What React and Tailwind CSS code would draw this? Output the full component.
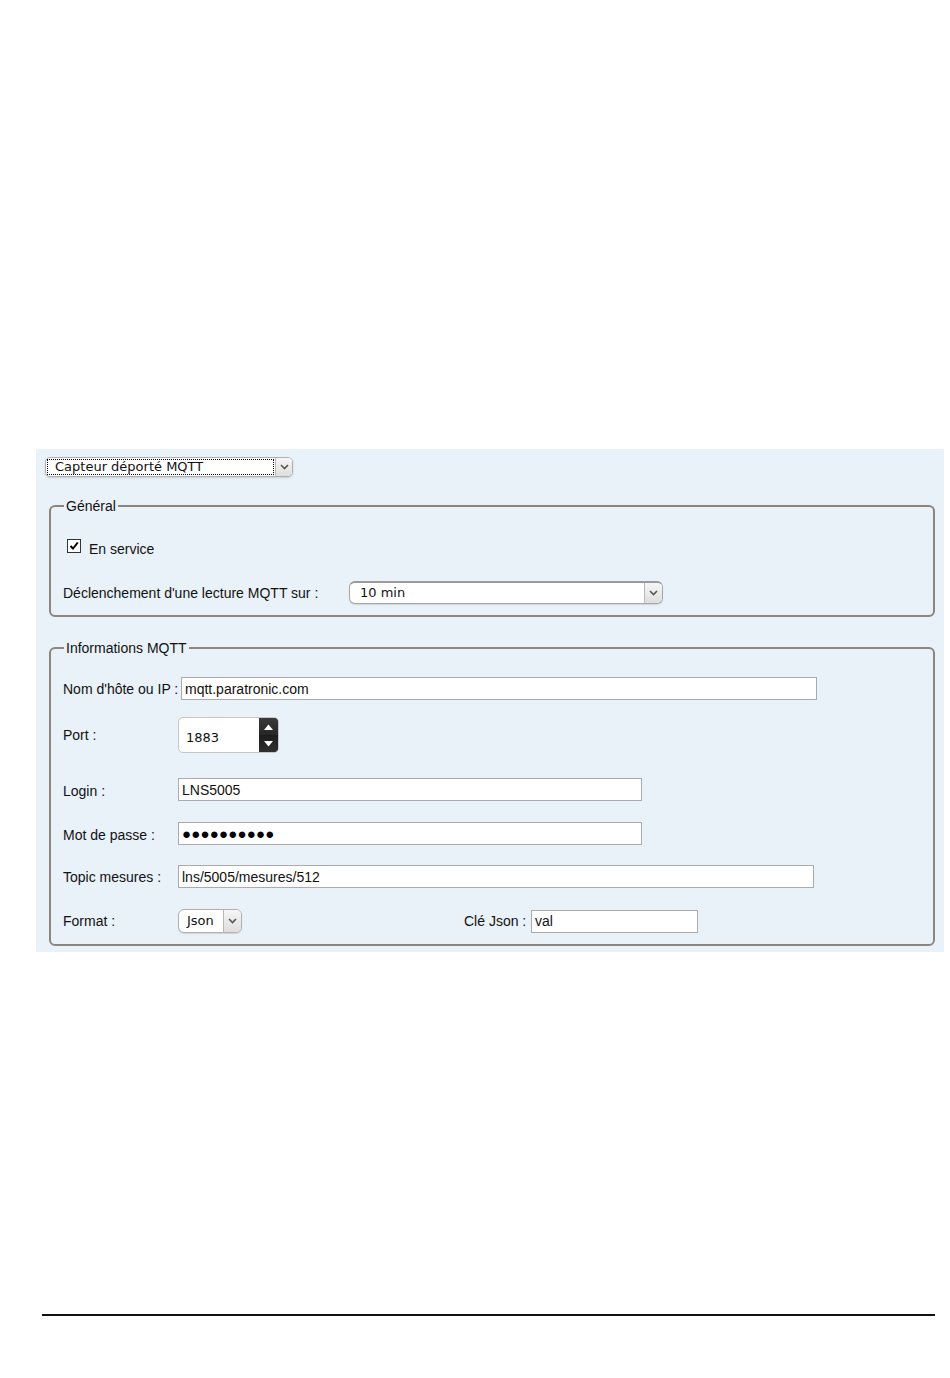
import React from "react";

const lbl = { fontFamily: '"Liberation Sans", Arial, sans-serif' };
const ver = { fontFamily: '"DejaVu Sans", Verdana, sans-serif' };

function Chevron() {
  return (
    <svg width="9" height="6" viewBox="0 0 9 6" className="block">
      <path d="M1 1 L4.5 4.5 L8 1" fill="none" stroke="#555" strokeWidth="1.6" />
    </svg>
  );
}

function ArrowBox({ w = 17 }) {
  return (
    <div
      className="h-full flex items-center justify-center border-l border-[#b8b8b8] bg-gradient-to-b from-[#f6f6f6] to-[#dedede]"
      style={{ width: w }}
    >
      <Chevron />
    </div>
  );
}

function TextInput({ w, value, children }) {
  return (
    <div
      className="h-[23px] bg-white border border-[#a9abae] flex items-center pl-[3px] text-[14px] leading-[16px] text-[#111]"
      style={{ width: w, ...lbl }}
    >
      {children ?? value}
    </div>
  );
}

export default function App() {
  return (
    <div className="w-[950px] h-[1378px] bg-white flex flex-col">
      <div className="mt-[449px] ml-[36px] w-[908px] bg-[#eaf2f9] pt-[8px] pb-[6px] flex flex-col">
        {/* top select */}
        <div className="ml-[9px] w-[248px] h-[20px] rounded-[5px] border border-[#b0b0b0] bg-white flex items-stretch overflow-hidden shadow-[0_1px_2px_rgba(0,0,0,0.15)]">
          <div className="flex-1 m-[1px] border border-dotted border-black flex items-center pl-[7px] text-[13px] leading-[16px] text-[#111]" style={ver}>
            Capteur déporté MQTT
          </div>
          <ArrowBox w={17} />
        </div>

        {/* Général */}
        <fieldset className="mt-[21px] ml-[13px] w-[886px] border-2 border-[#8c867e] rounded-[6px] px-[12px] pb-[11px]">
          <legend className="ml-[1px] px-[2px] text-[14px] leading-[16px] text-[#111]" style={lbl}>
            Général
          </legend>
          <div className="mt-[25px] flex items-start">
            <div className="ml-[4px] w-[14px] h-[14px] border border-[#333] bg-white flex items-center justify-center">
              <svg width="10" height="10" viewBox="0 0 10 10">
                <path d="M1.5 5 L4 7.5 L8.8 1.5" fill="none" stroke="#000" strokeWidth="2" />
              </svg>
            </div>
            <span className="ml-[8px] mt-[2px] text-[14px] leading-[16px] text-[#111]" style={lbl}>
              En service
            </span>
          </div>
          <div className="mt-[24px] flex items-center h-[23px]">
            <span className="w-[286px] text-[14px] leading-[16px] text-[#111] pt-[1px]" style={lbl}>
              Déclenchement d'une lecture MQTT sur :
            </span>
            <div className="w-[314px] h-[23px] rounded-[6px] border border-[#a8a8a8] border-t-2 border-t-[#9a9a9a] bg-white flex items-stretch overflow-hidden shadow-[0_1px_1px_rgba(0,0,0,0.12)]">
              <div className="flex-1 flex items-center pl-[10px] text-[13px] leading-[16px] text-[#111]" style={ver}>
                10 min
              </div>
              <ArrowBox w={18} />
            </div>
          </div>
        </fieldset>

        {/* Informations MQTT */}
        <fieldset className="mt-[23px] ml-[13px] w-[886px] border-2 border-[#8c867e] rounded-[6px] px-[12px] pb-[11px]">
          <legend className="ml-[1px] px-[2px] text-[14px] leading-[16px] text-[#111]" style={lbl}>
            Informations MQTT
          </legend>

          <div className="mt-[21px] flex items-center">
            <span className="w-[118px] text-[14px] leading-[16px] text-[#111]" style={lbl}>Nom d'hôte ou IP :</span>
            <TextInput w={636} value="mqtt.paratronic.com" />
          </div>

          <div className="mt-[17px] flex items-center">
            <span className="w-[115px] text-[14px] leading-[16px] text-[#111]" style={lbl}>Port :</span>
            <div className="w-[101px] h-[36px] flex rounded-[5px] border border-[#c6c6c6] bg-white overflow-hidden">
              <div className="flex-1 flex items-center pl-[7px] pt-[5px] text-[13px] leading-[16px] text-[#111]" style={ver}>1883</div>
              <div className="w-[19px] flex flex-col bg-[#2a2a2a] rounded-r-[4px]">
                <div className="flex-1 flex items-center justify-center bg-gradient-to-b from-[#3a3a3a] to-[#262626]">
                  <svg width="9" height="6" viewBox="0 0 9 6"><path d="M0 6 L4.5 0.5 L9 6 Z" fill="#fff" /></svg>
                </div>
                <div className="flex-1 flex items-center justify-center bg-gradient-to-b from-[#1c1c1c] to-[#303030]">
                  <svg width="9" height="6" viewBox="0 0 9 6"><path d="M0 0 L4.5 5.5 L9 0 Z" fill="#fff" /></svg>
                </div>
              </div>
            </div>
          </div>

          <div className="mt-[25px] flex items-center">
            <span className="w-[115px] text-[14px] leading-[16px] text-[#111] pt-[3px]" style={lbl}>Login :</span>
            <TextInput w={464} value="LNS5005" />
          </div>

          <div className="mt-[21px] flex items-center">
            <span className="w-[115px] text-[14px] leading-[16px] text-[#111] pt-[2px]" style={lbl}>Mot de passe :</span>
            <TextInput w={464}>
              <span className="text-[15px] tracking-[0.2px] text-black leading-none" style={lbl}>●●●●●●●●●●</span>
            </TextInput>
          </div>

          <div className="mt-[20px] flex items-center">
            <span className="w-[115px] text-[14px] leading-[16px] text-[#111]" style={lbl}>Topic mesures :</span>
            <TextInput w={636} value="lns/5005/mesures/512" />
          </div>

          <div className="mt-[21px] flex items-center">
            <span className="w-[115px] text-[14px] leading-[16px] text-[#111]" style={lbl}>Format :</span>
            <div className="w-[64px] h-[24px] rounded-[6px] border border-[#b0b0b0] bg-white flex items-stretch overflow-hidden shadow-[0_1px_1px_rgba(0,0,0,0.12)]">
              <div className="flex-1 flex items-center pl-[8px] text-[13px] leading-[16px] text-[#111]" style={ver}>Json</div>
              <ArrowBox w={18} />
            </div>
            <span className="ml-[222px] w-[67px] text-[14px] leading-[16px] text-[#111]" style={lbl}>Clé Json :</span>
            <TextInput w={167} value="val" />
          </div>
        </fieldset>
      </div>

      <div className="mt-[362px] ml-[42px] w-[893px] h-[2px] bg-[#111]" />
    </div>
  );
}
